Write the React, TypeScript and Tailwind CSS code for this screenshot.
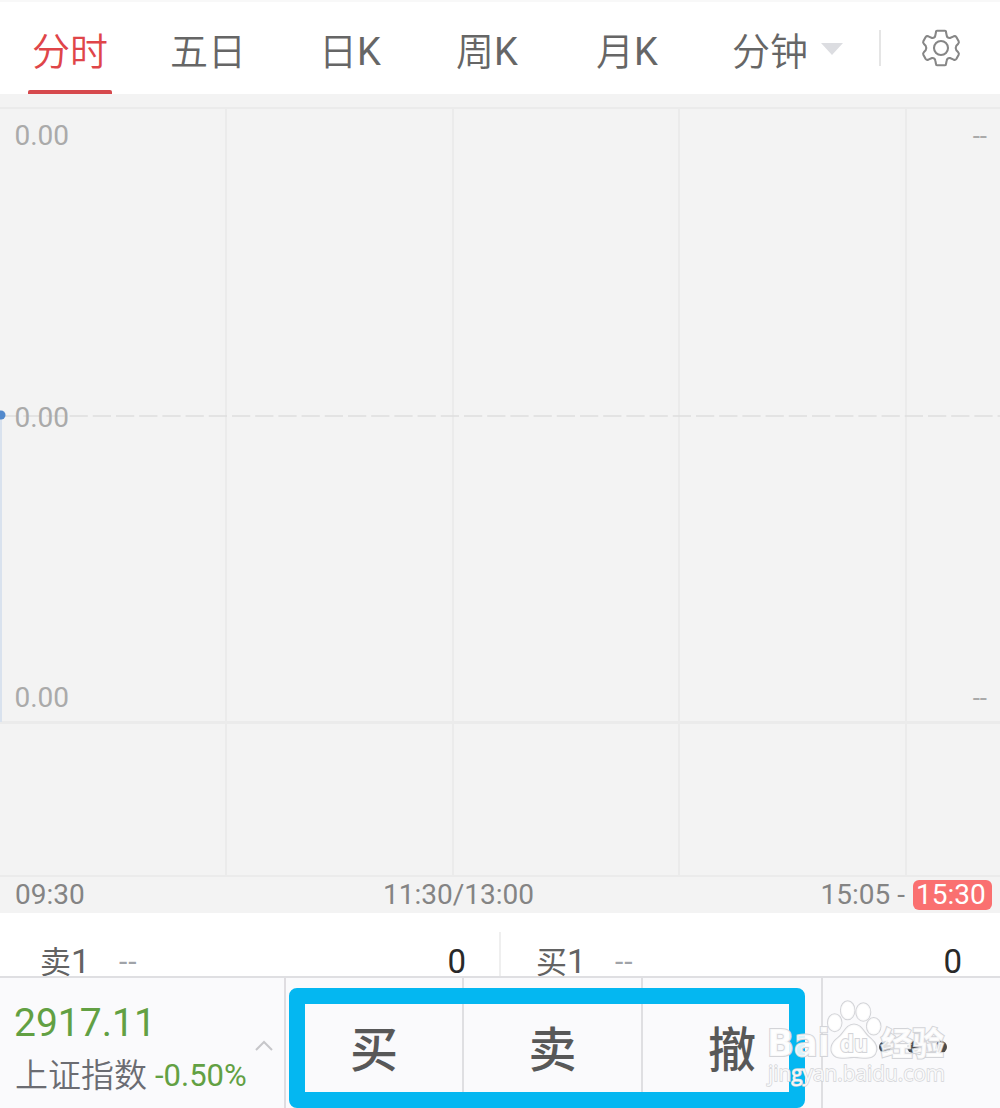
import React, { useState } from "react";
import clsx from "clsx";

interface TabType {
  name: string;
  suffix?: string;
  width: string;
}

interface OrderLevelProps {
  label: string;
  level: string;
  price: string;
  volume: string;
  className?: string;
}

const tabs: TabType[] = [
  { name: "分时", width: "w-[84px]" },
  { name: "五日", width: "w-[192px]" },
  { name: "日", suffix: "K", width: "w-[92px]" },
  { name: "周", suffix: "K", width: "w-[182px]" },
  { name: "月", suffix: "K", width: "w-[98px]" },
];

const actions = [
  { name: "买", width: "w-[178px]" },
  { name: "卖", width: "w-[179px]" },
  { name: "撤", width: "w-[180px]" },
];

function GearIcon() {
  return (
    <svg
      width="40"
      height="40"
      viewBox="92 24 120 120"
      fill="none"
      stroke="#868686"
      strokeWidth="6.2"
      strokeLinejoin="round"
    >
      <path d="M140 32H164Q167 32 167 36L169 46Q170 55 179 54L190 49Q195 47 198 51L205 64Q207 68 203 72L198 77Q194 84 198 91L203 96Q207 100 205 104L198 117Q195 121 190 119L179 114Q170 113 169 122L167 132Q167 136 164 136H140Q137 136 137 132L135 122Q134 113 125 114L114 119Q109 121 106 117L99 104Q97 100 101 96L106 91Q110 84 106 77L101 72Q97 68 99 64L106 51Q109 47 114 49L125 54Q134 55 135 46L137 36Q137 32 140 32Z" />
      <circle cx="152" cy="84" r="21" />
    </svg>
  );
}

function OrderLevel({ label, level, price, volume, className }: OrderLevelProps) {
  return (
    <div className={clsx("flex h-[60px] items-center leading-[60px]", className)}>
      <p className="w-[79px] text-[31px] text-[#636363]">
        {label}
        <span className="text-[34px]">{level}</span>
      </p>
      <p className="text-[30px] tracking-[1px] text-[#a0a3a8]">{price}</p>
      <p className="ml-auto text-[33px] text-[#292929]">{volume}</p>
    </div>
  );
}

function Watermark() {
  return (
    <svg
      className="absolute left-[764px] top-[18px] z-30"
      width="190"
      height="112"
      viewBox="0 0 190 112"
    >
      <g
        fill="#fff"
        fillOpacity="0.86"
        stroke="#d3d4d8"
        strokeWidth="2"
        paintOrder="stroke"
      >
        <ellipse cx="70.7" cy="26.7" rx="6.8" ry="8.5" />
        <ellipse cx="83.7" cy="14.3" rx="6.8" ry="9" />
        <ellipse cx="99.3" cy="16" rx="7" ry="8.8" />
        <ellipse cx="109.7" cy="30.3" rx="6.8" ry="8.3" />
        <path d="M90 28.5C82 28.5 80 38 74 42C67 47 66 54 69 58C73 64 82 61 90 61S107 64 111 58C114 53 112 47 106 42C100 38 98 28.5 90 28.5Z" />
        <text
          x="3"
          y="60"
          fontFamily="DejaVu Sans, sans-serif"
          fontWeight="700"
          fontSize="37"
          textLength="63"
          lengthAdjust="spacingAndGlyphs"
        >
          Bai
        </text>
        <text
          x="76"
          y="55.5"
          fontFamily="DejaVu Sans, sans-serif"
          fontWeight="700"
          fontSize="23"
          textLength="28"
          lengthAdjust="spacingAndGlyphs"
        >
          du
        </text>
        <text
          x="117"
          y="58.5"
          fontFamily="Noto Sans CJK SC, sans-serif"
          fontWeight="900"
          fontSize="32"
          textLength="63"
          lengthAdjust="spacingAndGlyphs"
        >
          经验
        </text>
        <text
          x="4"
          y="85"
          fontFamily="Open Sans, sans-serif"
          fontSize="21"
          textLength="177"
          lengthAdjust="spacingAndGlyphs"
          strokeWidth="1.4"
        >
          jingyan.baidu.com
        </text>
      </g>
    </svg>
  );
}

export default function App() {
  const [active, setActive] = useState("分时");

  return (
    <div className="flex h-[1108px] w-[1000px] flex-col overflow-hidden bg-white font-[Roboto,'Noto_Sans_CJK_SC',sans-serif]">
      {/* Period tabs */}
      <div className="flex h-[94px] shrink-0 border-t-2 border-[#f8f8f8] pl-7 text-[38px] font-[350] text-[#666]">
        {tabs.map((tab) => (
          <button
            key={tab.name}
            onClick={() => setActive(tab.name)}
            className={clsx(
              "flex h-[92px] flex-col items-center justify-end",
              tab.width,
              active === tab.name && "text-[#df4549]"
            )}
          >
            <span className="h-[68px] leading-[60px]">
              {tab.name}
              <span className="font-normal">{tab.suffix}</span>
            </span>
            <span
              className={clsx(
                "h-1 w-full rounded-t-xs",
                active === tab.name && "bg-[#d6494d]"
              )}
            />
          </button>
        ))}
        <button className="ml-[56px] flex h-[92px] items-start pt-[20px]">
          <span className="w-[75px] whitespace-nowrap leading-[60px]">分钟</span>
          <svg className="ml-3.5 mt-[21px]" width="22" height="12">
            <path d="M0 0H22L11 12Z" fill="#dcdde1" />
          </svg>
        </button>
        <div className="ml-[36px] mt-[28px] h-9 w-0.5 bg-[#e5e5e5]" />
        <button className="ml-[40px] mt-[26px] h-10">
          <GearIcon />
        </button>
      </div>

      {/* Chart */}
      <div className="h-[819px] shrink-0 bg-[#f3f3f3] pt-[13px]">
        <div className="relative h-[770px] border-y-2 border-[#ebebeb] text-[28px] leading-8 text-[#aaa]">
          <div className="grid h-[766px] grid-cols-[227px_227px_226px_227px_93px] grid-rows-[615px_151px]">
            {Array.from({ length: 10 }).map((_, i) => (
              <div
                key={i}
                className={clsx(
                  "border-[#ebebeb]",
                  i % 5 < 4 && "border-r-2",
                  i < 5 && "border-b-[3px]"
                )}
              />
            ))}
          </div>
          <svg className="absolute left-0 top-[300px]" width="1000" height="313">
            <path d="M0 7H1000" stroke="#dedede" strokeWidth="1.6" strokeDasharray="18.2 5" />
            <path d="M1 7V313" stroke="#d9e2ee" strokeWidth="2" />
            <circle cx="1" cy="6" r="4.5" fill="#5289cc" />
          </svg>
          <p className="absolute left-[14.5px] top-[11px]">0.00</p>
          <p className="absolute left-[14.5px] top-[293px]">0.00</p>
          <p className="absolute left-[14.5px] top-[573px]">0.00</p>
          <p className="absolute right-[13px] top-[11px] text-[26px]">--</p>
          <p className="absolute right-[13px] top-[573px] text-[26px]">--</p>
        </div>
        <div className="flex h-9 items-center pl-[15px] pr-2 text-[28px] leading-8 text-[#848484]">
          <p className="w-[368px]">09:30</p>
          <p>11:30/13:00</p>
          <p className="ml-auto flex items-center whitespace-nowrap">
            15:05 -
            <span className="ml-2 h-[30px] w-[79px] rounded-md bg-[#fa7070] pl-[3px] leading-[30px] text-white">
              15:30
            </span>
          </p>
        </div>
      </div>

      {/* Best ask / bid */}
      <div className="flex h-[63px] shrink-0 items-end">
        <OrderLevel label="卖" level="1" price="--" volume="0" className="w-[499px] pl-[40px] pr-[33px] pt-[31px]" />
        <div className="h-[44px] w-0.5 bg-[#efefef]" />
        <OrderLevel label="买" level="1" price="--" volume="0" className="w-[499px] pl-[35px] pr-[38px] pt-[31px]" />
      </div>

      {/* Index and trade buttons */}
      <div className="relative flex h-[132px] shrink-0 border-t-2 border-[#dfdfe2] bg-[#fafafc]">
        <div className="flex w-[286px] justify-between border-r-2 border-[#dfdde1] pl-[14px]">
          <div className="pt-[20px]">
            <p className="text-[39px] leading-[50px] text-[#62a043]">2917.11</p>
            <p className="ml-px flex gap-2 whitespace-nowrap leading-[56px]">
              <span className="text-[33px] font-[350] text-[#6b6c72]">上证指数</span>
              <span className="text-[31px] text-[#62a043]">-0.50%</span>
            </p>
          </div>
          <svg className="-ml-2 mr-[10px] mt-[60px] shrink-0" width="20" height="14" fill="none">
            <path d="M2 12L10 4L18 12" stroke="#c6c6ca" strokeWidth="2" />
          </svg>
        </div>
        {actions.map((action) => (
          <button
            key={action.name}
            className={clsx(
              "flex justify-center border-r-2 border-[#dfdfe2] pt-[38px] text-[48px] font-medium leading-[70px] text-[#585858]",
              action.width
            )}
          >
            {action.name}
          </button>
        ))}
        <div className="flex flex-1 gap-4 pl-[56px] pt-[63px]">
          <span className="h-[12px] w-[12px] rounded-full bg-[#4b4b4b]" />
          <span className="h-[12px] w-[12px] rounded-full bg-[#4b4b4b]" />
          <span className="h-[12px] w-[12px] rounded-full bg-[#4b4b4b]" />
        </div>
        <div className="absolute left-[289px] top-[10px] z-20 h-[120px] w-[516px] rounded-lg border-[16px] border-[#04b7f1]" />
        <Watermark />
      </div>
    </div>
  );
}
